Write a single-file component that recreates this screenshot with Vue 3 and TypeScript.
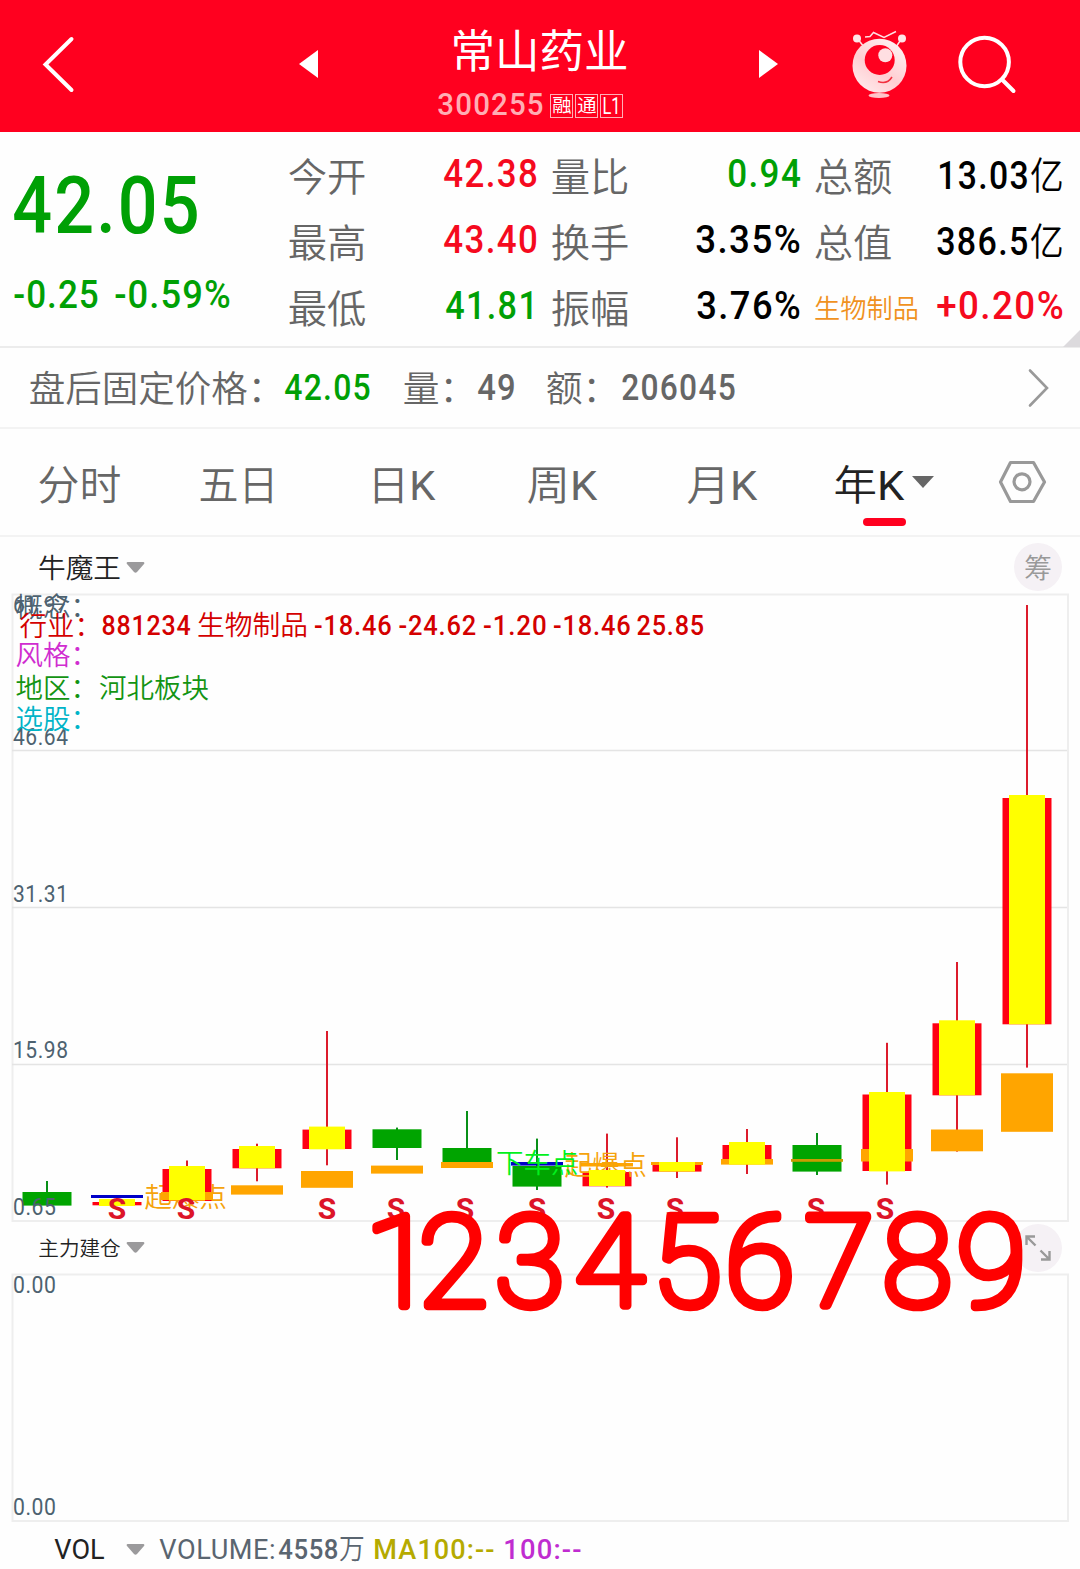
<script setup lang="ts">
import { h, type FunctionalComponent } from 'vue'

// A single line of text condensed or stretched to an exact drawn width.
interface FitProps {
  t: string
  w: number
  s: number
  gap?: number
}
const isCjk = (text: string) => text.charCodeAt(0) > 0x2e80
const Fit: FunctionalComponent<FitProps> = (p) => {
  const w = Number(p.w)
  const s = Number(p.s)
  const gap = Number(p.gap ?? 0)
  const bearing = s * (isCjk(p.t) ? 0.035 : 0.022)
  const last = p.t.slice(-1)
  const mixed = isCjk(p.t) !== isCjk(last)
  return h('svg', { class: 'fit', width: w, height: s }, [
    h(
      'text',
      {
        x: -bearing,
        y: s / 2 + s * (isCjk(p.t) ? 0.372 : 0.357),
        'font-size': s,
        'letter-spacing': s * gap,
        textLength: w + bearing * 2 + s * gap * 0.85,
        lengthAdjust: 'spacingAndGlyphs',
        fill: 'currentColor',
      },
      mixed ? [p.t.slice(0, -1), h('tspan', { 'font-weight': isCjk(last) ? 350 : 400 }, last)] : p.t,
    ),
  ])
}
Fit.props = ['t', 'w', 's', 'gap']

interface Cell {
  label: string
  lw: number
  ls: number
  value: string
  w: number
  tone: string
}
const cells: Cell[] = [
  { label: '今开', lw: 76, ls: 39, value: '42.38', w: 93, tone: 'red' },
  { label: '量比', lw: 76, ls: 39, value: '0.94', w: 72, tone: 'green' },
  { label: '总额', lw: 76, ls: 39, value: '13.03亿', w: 125, tone: 'black' },
  { label: '最高', lw: 76, ls: 39, value: '43.40', w: 93, tone: 'red' },
  { label: '换手', lw: 76, ls: 39, value: '3.35%', w: 104, tone: 'black' },
  { label: '总值', lw: 76, ls: 39, value: '386.5亿', w: 126, tone: 'black' },
  { label: '最低', lw: 76, ls: 39, value: '41.81', w: 91, tone: 'green' },
  { label: '振幅', lw: 76, ls: 39, value: '3.76%', w: 103, tone: 'black' },
  { label: '生物制品', lw: 103, ls: 26.5, value: '+0.20%', w: 126, tone: 'red' },
]

const tabs = [
  { name: '分时', w: 81, gap: 39 },
  { name: '五日', w: 77, gap: 80 },
  { name: '日K', w: 65, gap: 92 },
  { name: '周K', w: 68, gap: 93.5 },
  { name: '月K', w: 68, gap: 92.5 },
]

// Vertical positions are in page pixels; the chart's viewBox uses the same scale.
interface Candle {
  up: boolean
  wick: [number, number]
  body: [number, number]
  fill?: [number, number]
  band?: [number, number]
  blue?: [number, number]
}
const candles: Candle[] = [
  { up: false, wick: [1181, 1193], body: [1192, 1205.6] },
  { up: true, wick: [1195, 1204], body: [1202, 1205.3], fill: [1199, 1206], blue: [1195, 1198] },
  { up: true, wick: [1160.5, 1190], body: [1169, 1201], fill: [1166, 1200.6], band: [1192, 1200] },
  { up: true, wick: [1143.7, 1181.3], body: [1149, 1168.3], fill: [1146, 1168.3], band: [1185.3, 1194.6] },
  { up: true, wick: [1031, 1165.3], body: [1129.6, 1149], fill: [1126.6, 1149.3], band: [1171, 1187.8] },
  { up: false, wick: [1127.6, 1160], body: [1129.3, 1148], band: [1165.6, 1173.6] },
  { up: false, wick: [1111, 1150], body: [1148, 1162], band: [1162, 1168] },
  { up: false, wick: [1138.6, 1190], body: [1166, 1186.6], blue: [1162, 1165.6] },
  { up: true, wick: [1133.6, 1187.6], body: [1172, 1186.3], fill: [1170, 1186], band: [1163, 1166.5] },
  { up: true, wick: [1137.3, 1178], body: [1165, 1171.6], fill: [1162, 1171.6], band: [1162, 1165] },
  { up: true, wick: [1129, 1174], body: [1145, 1164], fill: [1142, 1164.6], band: [1159, 1164.6] },
  { up: false, wick: [1133, 1175], body: [1145, 1171.6], band: [1159, 1161.8] },
  { up: true, wick: [1042.8, 1184.6], body: [1094.5, 1171], fill: [1092, 1171.4], band: [1149, 1161.5] },
  { up: true, wick: [962, 1151.6], body: [1023.3, 1095.3], fill: [1020.3, 1095.3], band: [1129.5, 1151.3] },
  { up: true, wick: [605, 1067.6], body: [798, 1024.3], fill: [795, 1024.3], band: [1073.3, 1131.8] },
]
const cx = (i: number) => 47 + i * 70
const sellMarks = [117, 186, 327, 396, 465, 537, 606, 675, 816, 885]
const axis = [
  { v: '61.97', y: 612.5 },
  { v: '46.64', y: 745.3 },
  { v: '31.31', y: 902 },
  { v: '15.98', y: 1058 },
  { v: '0.65', y: 1215 },
]
const industry = [
  { t: '881234', x: 101.5, w: 90 },
  { t: '生物制品', x: 197, w: 111 },
  { t: '-18.46', x: 314, w: 78.5 },
  { t: '-24.62', x: 398.5, w: 78.5 },
  { t: '-1.20', x: 483, w: 64.5 },
  { t: '-18.46', x: 553, w: 78.5 },
  { t: '25.85', x: 636.5, w: 68.5 },
]
</script>

<template>
  <div class="page">
    <header class="top">
      <svg class="back" width="34" height="62" viewBox="0 0 34 62">
        <path d="M29.500 6 3.500 31.500 29.500 57" fill="none" stroke="#fff" stroke-width="4" stroke-linecap="round" />
      </svg>
      <svg class="prev" width="19" height="28" viewBox="0 0 19 28"><path d="M19 0V28L0 14Z" fill="#fff" /></svg>
      <div class="title">
        <Fit class="name" t="常山药业" w="175" s="45" />
        <div class="code">
          <Fit class="num" t="300255" w="105" s="32" gap=".04" />
          <div class="badges">
            <span><Fit t="融" w="18" s="18.5" /></span>
            <span><Fit t="通" w="18" s="18.5" /></span>
            <span><Fit t="L1" w="17" s="23" /></span>
          </div>
        </div>
      </div>
      <svg class="next" width="19" height="28" viewBox="0 0 19 28"><path d="M0 0V28L19 14Z" fill="#fff" /></svg>
      <svg class="mascot" width="58" height="72" viewBox="850 28 58 72">
        <defs>
          <linearGradient id="skin" x1="0" y1="1" x2=".7" y2="0">
            <stop offset="0" stop-color="#fff" /><stop offset=".12" stop-color="#ffe9eb" /><stop offset=".5" stop-color="#ffced2" /><stop offset="1" stop-color="#ffeff0" />
          </linearGradient>
        </defs>
        <g stroke="#ffdfe2" fill="none" stroke-width="1.5">
          <path d="M857 38 864 47M902 38 896 47" />
          <path d="M865 37 870 36.500 873.500 32.500 884 37.500 896 31.500" />
        </g>
        <circle cx="857" cy="38.500" r="4" fill="#ffe5e8" /><circle cx="902" cy="38.500" r="4" fill="#ffe5e8" />
        <circle cx="879.500" cy="65.700" r="27" fill="url(#skin)" />
        <circle cx="879.700" cy="60" r="15" fill="#ff001f" />
        <circle cx="885.300" cy="55.300" r="7" fill="#ffdfe2" />
        <path d="M878 81.500Q887 85 892 77" fill="none" stroke="#f2303f" stroke-width="1.500" />
        <ellipse cx="879" cy="95.500" rx="10.500" ry="2.400" fill="#ffc4c9" />
      </svg>
      <svg class="search" width="62" height="62" viewBox="955 34 62 62">
        <g fill="none" stroke="#fff" stroke-width="4" stroke-linecap="round">
          <circle cx="983.600" cy="62" r="24.300" /><path d="M1001 79.500 1012.500 91" />
        </g>
      </svg>
    </header>

    <section class="quote">
      <div class="price green num">
        <Fit class="last" t="42.05" w="184" s="79" gap=".03" />
        <div class="change"><Fit t="-0.25" w="84" s="38" gap=".03" /><Fit t="-0.59%" w="115" s="38" gap=".03" /></div>
      </div>
      <div class="grid">
        <div v-for="c in cells" :key="c.label" class="cell">
          <Fit :class="c.ls < 30 ? 'sector' : 'label'" :t="c.label" :w="c.lw" :s="c.ls" />
          <Fit class="num value" :class="[c.tone, { unit: c.value.endsWith('亿') }]" :t="c.value" :w="c.w" :s="c.value.endsWith('亿') ? 38 : 39.5" :gap="0.04" />
        </div>
      </div>
      <i class="corner"></i>
    </section>

    <section class="after">
      <Fit t="盘后固定价格：" w="253" s="36.5" />
      <Fit class="num green v1" t="42.05" w="85" s="36.5" gap=".04" />
      <Fit class="k2" t="量：" w="71" s="36.5" />
      <Fit class="num v2" t="49" w="37" s="36.5" gap=".04" />
      <Fit class="k3" t="额：" w="71" s="36.5" />
      <Fit class="num v3" t="206045" w="113" s="36.5" gap=".04" />
      <svg class="go" width="22" height="40" viewBox="0 0 22 40">
        <path d="M2 2.500 19 20 2 37.500" fill="none" stroke="#999" stroke-width="2.600" stroke-linecap="round" />
      </svg>
    </section>

    <nav class="tabs">
      <Fit v-for="t in tabs" :key="t.name" :t="t.name" :w="t.w" s="41" :style="{ marginLeft: t.gap + 'px' }" />
      <div class="active">
        <Fit t="年K" w="68" s="41" />
        <svg class="caret" width="22" height="12" viewBox="0 0 22 12"><path d="M0 0H22L11 12Z" fill="#666" /></svg>
        <i></i>
      </div>
      <svg class="gear" width="50" height="46" viewBox="997 459 50 46">
        <g fill="none" stroke="#999" stroke-width="3.200" stroke-linejoin="round">
          <path d="M1010.500 462.500H1033.500L1044.500 482 1033.500 501.500H1010.500L1000.500 482Z" /><circle cx="1022" cy="481.800" r="8" />
        </g>
      </svg>
    </nav>

    <div class="bar main">
      <Fit t="牛魔王" w="81" s="27.5" />
      <svg class="drop" width="19" height="11" viewBox="0 0 19 11"><path d="M1.500 0H17.500Q19 .5 18 2L11 10Q9.500 11.500 8 10L1 2Q0 .5 1.500 0Z" fill="#9b9a9c" /></svg>
      <span class="round"><Fit t="筹" w="26" s="27.500" /></span>
    </div>

    <svg class="chart" width="1080" height="629" viewBox="0 593 1080 629">
      <rect x="12.500" y="594.500" width="1055.500" height="626.500" fill="none" stroke="#eee" stroke-width="2" />
      <path d="M12 750.500H1067M12 907.500H1067M12 1064.500H1067" stroke="#e4e4e4" stroke-width="1.400" />
      <g font-size="27.500">
        <text x="144.500" y="1206.500" fill="#f5a30c">起爆点</text>
      </g>
      <g v-for="(c, i) in candles" :key="i">
        <rect :x="cx(i) - 1" :y="c.wick[0]" width="2" :height="c.wick[1] - c.wick[0]" :fill="c.up ? '#dc1c2c' : '#089018'" />
        <rect :x="cx(i) - 24.500" :y="c.body[0]" width="49" :height="c.body[1] - c.body[0]" :fill="c.up ? '#ff0012' : '#00a400'" />
        <rect v-if="c.band" :x="cx(i) - 26" :y="c.band[0]" width="52" :height="c.band[1] - c.band[0]" :fill="i === 11 ? '#c99c00' : '#ffa500'" />
        <rect v-if="c.blue" :x="cx(i) - 26" :y="c.blue[0]" width="52" :height="c.blue[1] - c.blue[0]" fill="#0000c8" />
        <rect v-if="c.fill" :x="cx(i) - 18" :y="c.fill[0]" width="36" :height="c.fill[1] - c.fill[0]" fill="#ff0" />
      </g>
      <g font-size="27.500">
        <text x="564.500" y="1175" fill="#f5a30c">起爆点</text>
        <text x="496" y="1172.500" fill="#00f01c">下车点</text>
      </g>
      <rect x="589" y="1170" width="36" height="16" fill="#ff0" />
      <g class="sell" font-size="30"><text v-for="x in sellMarks" :key="x" :x="x" y="1219">S</text></g>
      <g class="axis" font-size="23">
        <text v-for="a in axis" :key="a.v" x="13" :y="a.y" :textLength="a.v.length > 4 ? 55.500 : 43.500" lengthAdjust="spacingAndGlyphs">{{ a.v }}</text>
      </g>
      <g font-size="27.500">
        <text x="15.500" y="617" fill="#4d6270">概念：</text>
        <g fill="#d40000">
          <text x="19.500" y="635.500">行业：</text>
          <text v-for="n in industry" :key="n.x" :class="{ num: !isCjk(n.t) }" :x="n.x" y="635" :textLength="n.w" lengthAdjust="spacingAndGlyphs">{{ n.t }}</text>
        </g>
        <text x="15.500" y="665" fill="#d02cd0">风格：</text>
        <text x="15.500" y="698" fill="#139413">地区：</text>
        <text x="99" y="698" fill="#139413">河北板块</text>
        <text x="15.500" y="728.500" fill="#00b4c8">选股：</text>
      </g>
    </svg>

    <div class="bar sub">
      <Fit t="主力建仓" w="81" s="20.500" />
      <svg class="drop" width="19" height="11" viewBox="0 0 19 11"><path d="M1.500 0H17.500Q19 .5 18 2L11 10Q9.500 11.500 8 10L1 2Q0 .5 1.500 0Z" fill="#9b9a9c" /></svg>
      <span class="round">
        <svg width="26" height="26" viewBox="0 0 26 26"><path d="M1.500 10V1.500H10M2 2 10.500 10.500M24.500 16V24.500H16M24 24 15.500 15.500" fill="none" stroke="#999" stroke-width="2.400" /></svg>
      </span>
      <svg class="digits" width="680" height="120" viewBox="360 1200 680 120">
        <text x="365 418.500 495 575 652 725 804.500 882.500 956.500" y="1306">123456789</text>
      </svg>
    </div>

    <svg class="chart" width="1080" height="249" viewBox="0 1273 1080 249">
      <rect x="12.500" y="1274.500" width="1055.500" height="246.500" fill="none" stroke="#eee" stroke-width="2" />
      <g class="axis" font-size="23">
        <text x="13" y="1293" textLength="43.500" lengthAdjust="spacingAndGlyphs">0.00</text>
        <text x="13" y="1515" textLength="43.500" lengthAdjust="spacingAndGlyphs">0.00</text>
      </g>
    </svg>

    <footer class="bar vol">
      <Fit class="w4" t="VOL" w="49" s="28.500" />
      <svg class="drop" width="19" height="11" viewBox="0 0 19 11"><path d="M1.500 0H17.500Q19 .5 18 2L11 10Q9.500 11.500 8 10L1 2Q0 .5 1.500 0Z" fill="#9b9a9c" /></svg>
      <Fit class="v w4" t="VOLUME:" w="115" s="28.500" gap=".02" />
      <Fit class="n num" t="4558万" w="85" s="28.500" gap=".02" />
      <Fit class="ma num" t="MA100:--" w="120" s="28.500" gap=".04" />
      <Fit class="m2 num" t="100:--" w="77" s="28.500" gap=".04" />
    </footer>
  </div>
</template>

<style>
body { margin: 0; background: #fff; }
</style>

<style scoped>
.page {
  width: 1080px; height: 1569px; overflow: hidden; background: #fefefe; color: #666;
  font-family: Roboto, 'Noto Sans CJK SC', sans-serif; font-weight: 350;
}
svg { display: block; flex: none; }
.fit { overflow: visible; display: block; flex: none; }
.num { font-weight: 500; }
.w4 { font-weight: 400; }
.green { color: #00a005; }
.red { color: #f50a1e; }
.black { color: #000; }

.top { height: 132px; background: #ff001f; display: flex; color: #fff; align-items: flex-start; }
.back { margin: 33px 0 0 42px; }
.prev { margin: 50px 0 0 223px; }
.title { margin: 29px 0 0 120px; width: 186px; display: flex; flex-direction: column; }
.name { margin-left: 14px; font-weight: 400; }
.code { display: flex; align-items: center; margin-top: 14px; height: 32px; color: #ffadb4; }
.badges { display: flex; gap: 2px; margin: 3px 0 0 7px; color: #fff; font-weight: 400; }
.badges span { box-sizing: border-box; width: 23px; height: 24px; border: 1px solid #ffb0b6; display: flex; align-items: center; justify-content: center; }
.next { margin: 50px 0 0 135px; }
.mascot { margin: 28px 0 0 72px; }
.search { margin: 34px 0 0 48px; }

.quote { position: relative; box-sizing: border-box; height: 216px; border-bottom: 2px solid #ececec; display: flex; }
.price { width: 289px; box-sizing: border-box; padding: 33px 0 0 14px; }
.change { display: flex; gap: 17px; margin-top: 31px; }
.grid { display: grid; grid-template-columns: 263px 263px 248px; grid-auto-rows: 66px; padding-top: 11px; }
.cell { width: 248px; display: flex; justify-content: space-between; align-items: center; }
.value { margin-bottom: 6px; }
.value.unit { margin-bottom: 3px; }
.sector { color: #f0921e; }
.corner { position: absolute; right: 0; bottom: -1px; width: 17px; height: 17px; background: #dcdadd; clip-path: polygon(100% 0, 100% 100%, 0 100%); }

.after { box-sizing: border-box; height: 81px; border-bottom: 2px solid #f3f3f3; display: flex; align-items: center; padding: 2px 0 0 30px; }
.v1 { margin: 0 0 3px 2px; }
.k2 { margin-left: 34px; }
.v2 { margin: 0 0 3px 3px; }
.k3 { margin-left: 32px; }
.v3 { margin: 0 0 3px 4px; }
.go { margin: 0 0 1px 293px; }

.tabs { box-sizing: border-box; height: 108px; border-bottom: 2px solid #f3f3f3; display: flex; align-items: center; padding-top: 5px; }
.active { position: relative; margin-left: 79px; display: flex; align-items: center; gap: 9px; color: #222; width: 100px; }
.active i { position: absolute; left: 28px; top: 53.5px; width: 43px; height: 8px; border-radius: 4px; background: #ff001f; }
.caret { margin-bottom: 5px; }
.gear { margin: 0 0 5px 62px; }

.bar { display: flex; align-items: center; padding-left: 39px; color: #222; box-sizing: border-box; }
.main { height: 56px; padding-top: 4px; }
.drop { margin-left: 6px; }
.round { width: 48px; height: 48px; border-radius: 50%; background: #f5f1f5; display: flex; align-items: center; justify-content: center; margin-left: 869px; color: #999; flex: none; }
.sub { height: 51px; position: relative; }
.main .fit, .sub .fit { margin-top: 1px; }
.digits { position: absolute; left: 360px; top: -22px; overflow: visible; }
.digits text { font-size: 127px; font-weight: 100; fill: #f00; stroke: #f00; stroke-width: 8.5px; stroke-linejoin: round; stroke-linecap: round; }
.chart text { font-weight: 350; }
.chart .num { font-weight: 500; letter-spacing: 0.9px; }
.chart .axis text { fill: #4d6270; font-weight: 400; letter-spacing: 0.6px; }
.chart .sell text { fill: #dc1428; font-weight: 700; text-anchor: middle; }

.vol { height: 47px; padding: 7px 0 0 55px; }
.vol .drop { margin-left: 22px; }
.v { margin-left: 15px; color: #5a6570; }
.n { margin-left: 4px; color: #5a6570; }
.ma { margin-left: 10px; color: #b5aa00; }
.m2 { margin-left: 10px; color: #c02cd0; }
</style>
